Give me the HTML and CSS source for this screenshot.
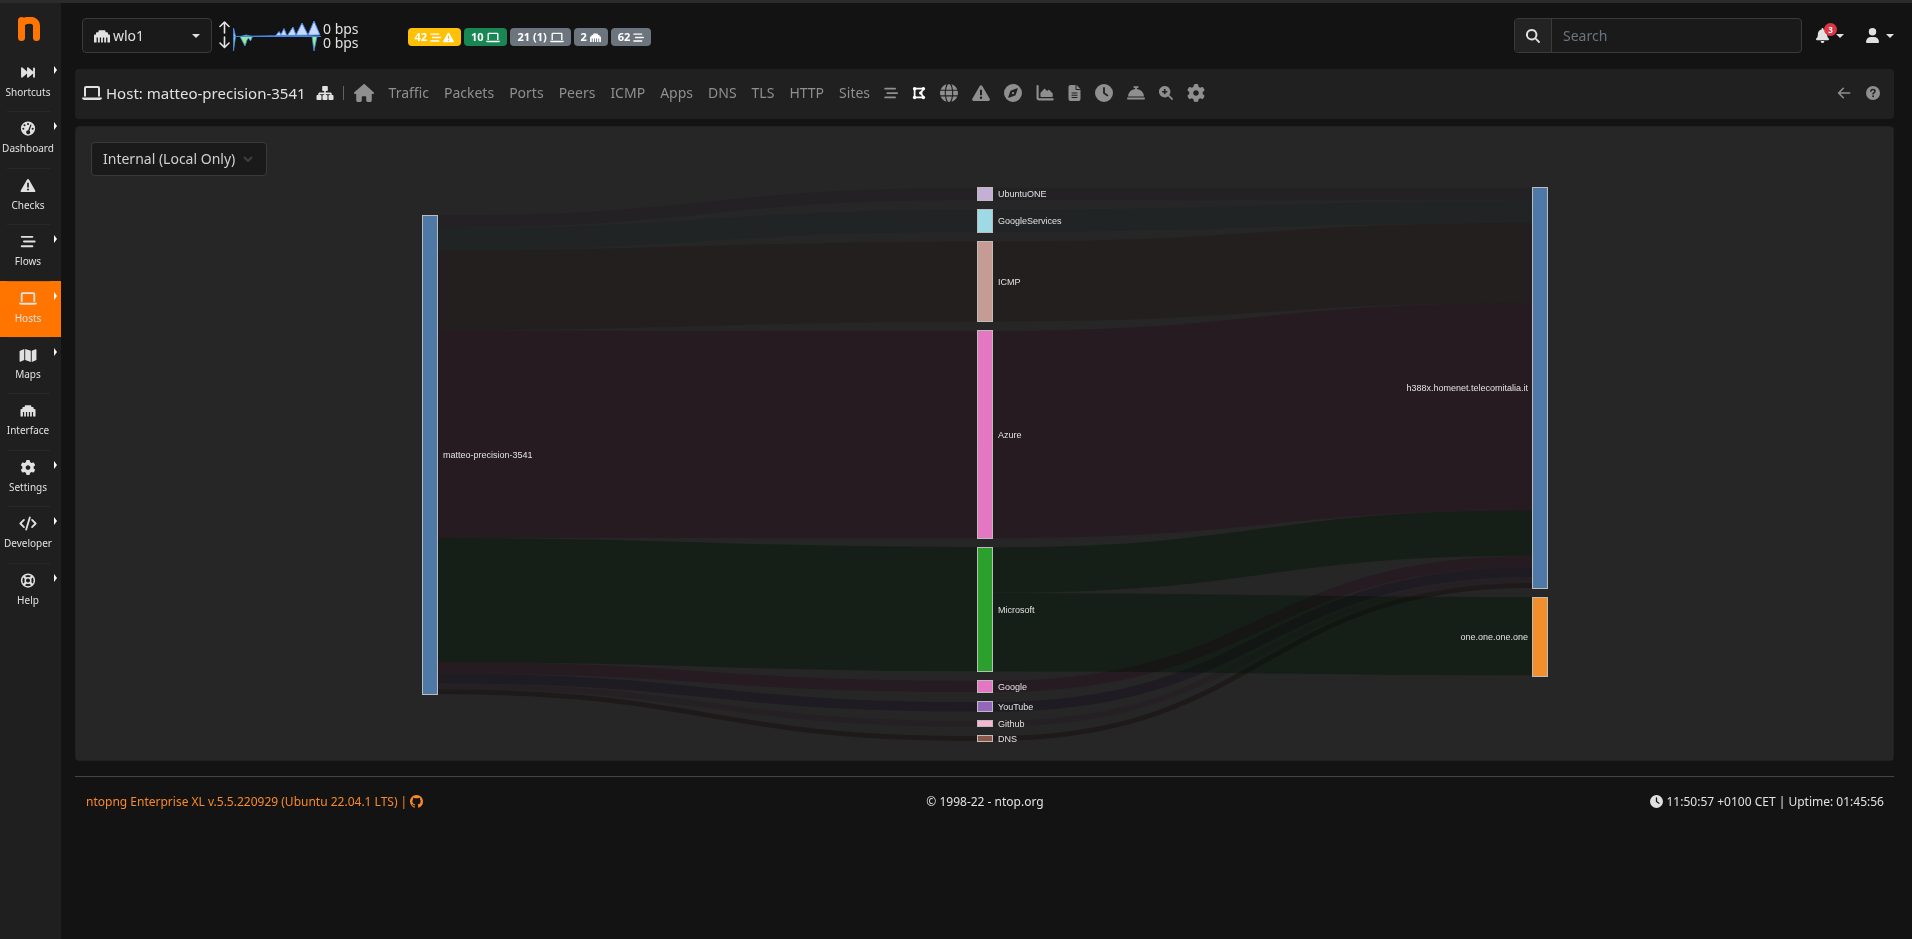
FILE: index.html
```html
<!DOCTYPE html>
<html lang="en">
<head>
<meta charset="utf-8">
<title>Host: matteo-precision-3541</title>
<link rel="stylesheet" href="styles.css">
</head>
<body>
<svg class="sprite" aria-hidden="true">
  <symbol id="i-forward" viewBox="0 0 16 16"><path d="M.6 3.2v9.6c0 .8.9 1.1 1.4.6L7 9v3.800c0 .8.900 1.100 1.400.6L13.400 9v4.200h2V2.800h-2V7L8.400 2.600C7.900 2.100 7 2.400 7 3.200V7L2 2.600C1.500 2.100.6 2.400.6 3.200z"/></symbol>
  <symbol id="i-gauge" viewBox="0 0 16 16"><path fill-rule="evenodd" d="M8 .4a7.600 7.600 0 1 0 0 15.200A7.600 7.600 0 0 0 8 .4zM8 2a1.100 1.100 0 1 1 0 2.200A1.100 1.100 0 0 1 8 2zM4.300 3.500a1.100 1.100 0 1 1 0 2.200 1.100 1.100 0 0 1 0-2.200zM3 7.200a1.100 1.100 0 1 1 0 2.200 1.100 1.100 0 0 1 0-2.200zm10 0a1.100 1.100 0 1 1 0 2.200 1.100 1.100 0 0 1 0-2.200zM10.600 3.600l1.200.5-2.200 6.200a2.200 2.200 0 1 1-1.400-.5z"/></symbol>
  <symbol id="i-warning" viewBox="0 0 16 16"><path fill-rule="evenodd" d="M8 1c.4 0 .8.2 1 .6l6.700 11.600c.5.800-.1 1.800-1 1.800H1.300c-.9 0-1.500-1-1-1.800L7 1.600c.2-.4.6-.6 1-.6zM7.100 5v5h1.800V5zM8 11.200a1.100 1.100 0 1 0 0 2.200 1.100 1.100 0 0 0 0-2.200z"/></symbol>
  <symbol id="i-stream" viewBox="0 0 16 16"><path d="M1.300 2h11.400a.8.8 0 0 1 0 2H1.300a.8.8 0 0 1 0-2zm2.400 5h11.400a.8.8 0 0 1 0 2H3.700a.8.8 0 0 1 0-2zm-2.400 5h11.400a.8.8 0 0 1 0 2H1.300a.8.8 0 0 1 0-2z"/></symbol>
  <symbol id="i-laptop" viewBox="0 0 20 16"><path fill-rule="evenodd" d="M4 1h12a2 2 0 0 1 2 2v8.500h-2V3H4v8.500H2V3a2 2 0 0 1 2-2zM.6 12.600h18.800c.3 0 .6.2.6.500 0 1-.9 1.900-2.400 1.900H2.400C.9 15 0 14.100 0 13.100c0-.3.3-.5.6-.500z"/></symbol>
  <symbol id="i-map" viewBox="0 0 18 16"><path d="M0 4.200 5 2.100v11.800l-4.200 1.700c-.4.2-.8-.1-.8-.500zM6 2.100l6 2v11.800l-6-2zm7 2 4.200-1.700c.4-.2.800.1.800.500v10.900l-5 2.100z"/></symbol>
  <symbol id="i-ethernet" viewBox="0 0 16 16"><path d="M0 14.500V7.500C0 6.900.4 6.500 1 6.500h1V5.200c0-.5.4-1 1-1h1.500V3.300c0-.500.4-1 1-1h5c.6 0 1 .5 1 1v.900H13c.6 0 1 .5 1 1v1.300h1c.6 0 1 .4 1 1v7H13.400V9.600h-1.300v4.900h-1.900V9.600H8.900v4.900H7.100V9.600H5.800v4.900H3.900V9.600H2.600v4.900z"/></symbol>
  <symbol id="i-gear" viewBox="0 0 512 512"><path fill-rule="evenodd" d="M495.900 166.600c3.200 8.700.5 18.400-6.400 24.600l-43.300 39.400c1.100 8.300 1.700 16.800 1.700 25.400s-.6 17.100-1.700 25.400l43.300 39.400c6.900 6.200 9.600 15.900 6.400 24.600c-4.400 11.900-9.700 23.300-15.800 34.300l-4.700 8.100c-6.600 11-14 21.400-22.100 31.200c-5.900 7.200-15.700 9.600-24.500 6.800l-55.700-17.700c-13.400 10.300-28.200 18.900-44 25.400l-12.500 57.100c-2 9.100-9 16.300-18.200 17.800c-13.800 2.300-28 3.500-42.500 3.500s-28.700-1.200-42.500-3.500c-9.200-1.500-16.200-8.700-18.200-17.800l-12.500-57.100c-15.800-6.500-30.600-15.100-44-25.400L83.100 425.900c-8.800 2.800-18.600.3-24.500-6.800c-8.100-9.800-15.500-20.200-22.100-31.200l-4.700-8.100c-6.100-11-11.400-22.400-15.800-34.300c-3.200-8.700-.5-18.400 6.400-24.600l43.300-39.400C64.600 273.100 64 264.600 64 256s.6-17.100 1.700-25.400L22.400 191.200c-6.900-6.200-9.600-15.900-6.400-24.600c4.400-11.900 9.700-23.300 15.800-34.300l4.700-8.100c6.600-11 14-21.400 22.100-31.200c5.900-7.200 15.700-9.600 24.500-6.800l55.700 17.700c13.400-10.300 28.200-18.900 44-25.400l12.500-57.100c2-9.100 9-16.300 18.200-17.800C227.300 1.200 241.500 0 256 0s28.700 1.200 42.500 3.500c9.200 1.500 16.200 8.700 18.200 17.800l12.500 57.100c15.800 6.500 30.600 15.100 44 25.400l55.700-17.700c8.800-2.800 18.600-.3 24.500 6.800c8.100 9.800 15.500 20.200 22.100 31.200l4.700 8.100c6.100 11 11.400 22.400 15.800 34.300zM256 336c44.200 0 80-35.800 80-80s-35.800-80-80-80s-80 35.800-80 80s35.800 80 80 80z"/></symbol>
  <symbol id="i-code" viewBox="0 0 20 16"><path fill="none" stroke="currentColor" stroke-width="2" stroke-linecap="round" stroke-linejoin="round" d="M5.500 4 1.500 8l4 4M14.500 4l4 4-4 4M12 1.200 8 14.800"/></symbol>
  <symbol id="i-ring" viewBox="0 0 16 16"><g fill="none" stroke="currentColor"><circle cx="8" cy="8" r="6.800" stroke-width="1.600"/><circle cx="8" cy="8" r="3" stroke-width="1.600"/><path stroke-width="2.600" d="m3.200 3.200 2.600 2.600m7-2.600-2.600 2.600m-7 7 2.600-2.600m7 2.600-2.600-2.600"/></g></symbol>
  <symbol id="i-sitemap" viewBox="0 0 18 16"><path d="M7 1h4c.5 0 .8.3.8.8v3.400c0 .5-.3.8-.8.8H9.800v1.600h4.400c1 0 1.600.7 1.600 1.600V10h.9c.500 0 .800.3.8.8v3.400c0 .5-.3.8-.8.800h-3.400c-.5 0-.8-.3-.8-.8v-3.400c0-.5.3-.8.8-.8h.9V9.200H9.800V10h.9c.5 0 .8.3.8.8v3.400c0 .5-.3.8-.8.8H7.300c-.5 0-.8-.3-.8-.8v-3.400c0-.5.3-.8.8-.8h.9v-.8H3.800v.8h.9c.5 0 .8.3.8.8v3.400c0 .5-.3.8-.8.8H1.300c-.5 0-.8-.3-.8-.8v-3.400c0-.5.3-.8.8-.8h.9v-.8c0-.9.600-1.600 1.600-1.600h4.400V6H7c-.5 0-.8-.3-.8-.800V1.800c0-.500.3-.8.8-.8z"/></symbol>
  <symbol id="i-home" viewBox="0 0 576 512"><path d="M575.800 255.500c0 18-15 32.100-32 32.100h-32l.7 160.200c0 2.700-.2 5.400-.5 8.100V472c0 22.100-17.900 40-40 40H392c-22.100 0-40-17.900-40-40V384c0-17.700-14.300-32-32-32H256c-17.700 0-32 14.300-32 32v88c0 22.100-17.900 40-40 40H104c-22.100 0-40-17.900-40-40V287.600H32c-18 0-32-14-32-32.100c0-9 3-17 10-24L266.400 8c7-7 15-8 22-8s15 2 21 7L564.800 231.500c8 7 12 15 11 24z"/></symbol>
  <symbol id="i-polygon" viewBox="0 0 16 16"><path fill="none" stroke="currentColor" stroke-width="2" d="M3 3h10M3 13h10M3 3v10M13 3.500 10 8l3 4.500"/><circle cx="3" cy="3" r="2"/><circle cx="13" cy="3" r="2"/><circle cx="3" cy="13" r="2"/><circle cx="13" cy="13" r="2"/><circle cx="10" cy="8" r="2"/></symbol>
  <symbol id="i-globe" viewBox="0 0 16 16"><path d="M5.500 5c.4-3 1.400-5 2.500-5s2.100 2 2.500 5zM10.700 6c.1 1.300.1 2.700 0 4H5.300a24 24 0 0 1 0-4zM5.500 11h5c-.4 3-1.400 5-2.500 5s-2.100-2-2.500-5zM10.200.3A8 8 0 0 1 15.400 5h-3.900C11.200 3 10.800 1.400 10.200.3zM15.700 6a8 8 0 0 1 0 4h-4c.1-1.300.1-2.700 0-4zM15.400 11a8 8 0 0 1-5.200 4.700c.6-1.100 1-2.700 1.300-4.700zM5.800.3C5.200 1.400 4.800 3 4.500 5H.6A8 8 0 0 1 5.800.3zM.3 6h4c-.1 1.300-.1 2.700 0 4h-4a8 8 0 0 1 0-4zM.6 11h3.900c.3 2 .7 3.600 1.300 4.700A8 8 0 0 1 .6 11z"/></symbol>
  <symbol id="i-compass" viewBox="0 0 16 16"><path fill-rule="evenodd" d="M8 0a8 8 0 1 0 0 16A8 8 0 0 0 8 0zm3.600 3.800c.4-.2.700.2.600.6L10.300 9.700c-.1.300-.3.500-.6.600l-5.300 1.900c-.4.100-.8-.2-.6-.6l1.900-5.300c.1-.3.3-.5.6-.6zM8 7a1 1 0 1 0 0 2 1 1 0 0 0 0-2z"/></symbol>
  <symbol id="i-chart" viewBox="0 0 17 16"><path fill="none" stroke="currentColor" stroke-width="2" stroke-linecap="round" d="M1.500 1.500v11c0 1 .5 1.500 1.500 1.500h12.800"/><path d="M4.500 7.600 7.400 4.400c.3-.4.800-.4 1.100-.1L10.500 6l1-.9c.3-.3.8-.3 1.100 0L15.400 8c.3.300.4.500.4.800V11c0 .5-.3.800-.8.800H5c-.5 0-.8-.3-.8-.8V8.300c0-.3.1-.5.3-.7z"/></symbol>
  <symbol id="i-file" viewBox="0 0 12 16"><path fill-rule="evenodd" d="M2 0h5v4c0 .6.4 1 1 1h4v9a2 2 0 0 1-2 2H2a2 2 0 0 1-2-2V2C0 .9.9 0 2 0zm6 0 4 4H8zM3.500 7.500h5a.5.5 0 0 1 0 1.100h-5a.5.5 0 0 1 0-1.100zm0 2.200h5a.5.5 0 0 1 0 1.100h-5a.5.5 0 0 1 0-1.100zm0 2.200h5a.5.5 0 0 1 0 1.100h-5a.5.5 0 0 1 0-1.100z"/></symbol>
  <symbol id="i-clock" viewBox="0 0 16 16"><path fill-rule="evenodd" d="M8 0a8 8 0 1 0 0 16A8 8 0 0 0 8 0zM7.200 3.500c0-1 1.600-1 1.600 0v4.200l2.700 1.800c.8.600 0 1.800-.9 1.300L7.600 8.700a.9.900 0 0 1-.4-.7z"/></symbol>
  <symbol id="i-concierge" viewBox="0 0 16 16"><path d="M6.300 2h3.400c.9 0 .9 1.500 0 1.500H8.800v.9A6.800 6.800 0 0 1 15 11H1a6.800 6.800 0 0 1 6.200-6.600v-.9h-.9c-.9 0-.9-1.500 0-1.500zM.8 12h14.400c1 0 1 1.800 0 1.800H.8c-1 0-1-1.800 0-1.800z"/></symbol>
  <symbol id="i-zoom" viewBox="0 0 16 16"><path fill-rule="evenodd" d="M6.500 0a6.500 6.500 0 0 1 5.200 10.400l4 3.900c.8.900-.5 2.300-1.400 1.400l-3.900-4A6.500 6.500 0 1 1 6.500 0zM5.600 3.500v2.100H3.500v1.800h2.100v2.100h1.800V7.400h2.100V5.600H7.400V3.500z"/></symbol>
  <symbol id="i-search" viewBox="0 0 16 16"><path fill-rule="evenodd" d="M6.500 0a6.500 6.500 0 0 1 5.200 10.400l3.900 3.700c.9.900-.6 2.500-1.500 1.600l-3.700-4A6.500 6.500 0 1 1 6.500 0zm0 2.200a4.300 4.300 0 1 0 0 8.600 4.300 4.300 0 0 0 0-8.600z"/></symbol>
  <symbol id="i-back" viewBox="0 0 16 16"><path fill="none" stroke="currentColor" stroke-width="1.800" stroke-linecap="round" stroke-linejoin="round" d="M14.500 8H2M7.200 2.600 1.800 8l5.400 5.400"/></symbol>
  <symbol id="i-help" viewBox="0 0 16 16"><circle cx="8" cy="8" r="8"/><path fill="none" stroke="#202020" stroke-width="1.700" stroke-linecap="round" d="M5.600 6c.1-1.200.9-1.900 2.100-1.900 1.500 0 2.600.6 2.600 1.900 0 1.400-1.400 1.700-2.200 2.600V9"/><circle cx="8.100" cy="11.700" r="1.100" fill="#202020"/></symbol>
  <symbol id="i-bell" viewBox="0 0 448 512"><path d="M224 0c-17.700 0-32 14.300-32 32V51.200C119 66 64 130.600 64 208v18.800c0 47-17.300 92.400-48.500 127.600l-7.400 8.300c-8.400 9.400-10.400 22.900-5.300 34.400S19.400 416 32 416H416c12.600 0 24-7.400 29.200-18.900s3.100-25-5.300-34.400l-7.400-8.300C401.300 319.200 384 273.900 384 226.800V208c0-77.400-55-142-128-156.800V32c0-17.700-14.300-32-32-32zm45.300 493.300c12-12 18.700-28.300 18.700-45.300H160c0 17 6.700 33.300 18.700 45.300s28.300 18.700 45.300 18.700s33.300-6.700 45.300-18.700z"/></symbol>
  <symbol id="i-user" viewBox="0 0 14 16"><circle cx="7" cy="4" r="4"/><path d="M5.600 9.500h2.800A5.500 5.500 0 0 1 14 15c0 .6-.4 1-1 1H1c-.6 0-1-.4-1-1a5.500 5.500 0 0 1 5.600-5.500z"/></symbol>
  <symbol id="i-github" viewBox="0 0 16 16"><path d="M8 0C3.580 0 0 3.580 0 8c0 3.540 2.290 6.530 5.470 7.590.4.070.55-.17.55-.38 0-.19-.01-.82-.01-1.490-2.010.37-2.530-.49-2.690-.94-.09-.23-.48-.94-.82-1.130-.28-.15-.68-.52-.01-.53.63-.01 1.080.58 1.230.82.72 1.210 1.870.87 2.330.66.07-.52.28-.87.51-1.070-1.780-.2-3.640-.89-3.640-3.950 0-.87.31-1.590.82-2.150-.08-.2-.36-1.020.08-2.120 0 0 .67-.21 2.200.82.64-.18 1.320-.27 2-.27s1.360.09 2 .27c1.530-1.040 2.200-.82 2.200-.82.44 1.100.16 1.920.08 2.120.51.56.82 1.270.82 2.150 0 3.070-1.870 3.750-3.650 3.950.29.25.54.73.54 1.480 0 1.070-.01 1.930-.01 2.200 0 .21.15.46.55.38A8 8 0 0 0 16 8c0-4.420-3.580-8-8-8z"/></symbol>
</svg>

<div class="app">
  <aside class="sidebar">
    <a class="logo" href="#" aria-label="ntopng"><svg viewBox="0 0 22 24"><path fill="none" stroke="#ff7500" stroke-width="7" stroke-linecap="round" stroke-linejoin="round" d="M3.500 20.500v-17M3.800 6C7 2.600 18.500 1 18.500 9v11.500"/></svg></a>
    <nav class="menu">
      <a class="item more" href="#"><svg class="ic"><use href="#i-forward"/></svg><span>Shortcuts</span></a>
      <a class="item more" href="#"><svg class="ic"><use href="#i-gauge"/></svg><span>Dashboard</span></a>
      <a class="item" href="#"><svg class="ic"><use href="#i-warning"/></svg><span>Checks</span></a>
      <a class="item more" href="#"><svg class="ic"><use href="#i-stream"/></svg><span>Flows</span></a>
      <a class="item more active" href="#"><svg class="ic wide"><use href="#i-laptop"/></svg><span>Hosts</span></a>
      <a class="item more" href="#"><svg class="ic wide"><use href="#i-map"/></svg><span>Maps</span></a>
      <a class="item" href="#"><svg class="ic"><use href="#i-ethernet"/></svg><span>Interface</span></a>
      <a class="item more" href="#"><svg class="ic"><use href="#i-gear"/></svg><span>Settings</span></a>
      <a class="item more" href="#"><svg class="ic wide"><use href="#i-code"/></svg><span>Developer</span></a>
      <a class="item more" href="#"><svg class="ic"><use href="#i-ring"/></svg><span>Help</span></a>
    </nav>
  </aside>

  <div class="main">
    <header class="topbar">
      <button class="iface" type="button"><svg class="ic"><use href="#i-ethernet"/></svg><span>wlo1</span><i class="caret"></i></button>
      <div class="rates">
        <svg class="spark" viewBox="0 0 102 32" aria-hidden="true">
          <path fill="none" stroke="#e4e4e4" stroke-width="1.600" stroke-linecap="round" stroke-linejoin="round" d="M5.500 13V2.500M1 6.500l4.500-4.500L10 6.500M5.500 17v10M1 23l4.500 4.500L10 23"/>
          <path fill="#c6dafd" stroke="#4a86e8" d="M14.500 16.500V8l2 8.500H22l5-1.500 6 1.500h16l2-.5 2 .5h3l4-5 2 3 3-6 3 7.500 6-9 3 8 6-12 6 12 6-14 6 14z"/>
          <path fill="#90f08c" stroke="#4a86e8" stroke-width=".8" d="M14.500 16.500V31l2-14.500H21l5 9.500 2-6 1.500-2 2 3 2-4.500h59.500l2 14.500 3-14.500z"/>
          <path stroke="#4a86e8" d="M14 16.500h88"/>
        </svg>
        <div class="bps">0 bps<br>0 bps</div>
      </div>
      <div class="badges">
        <a class="badge warn" href="#">42 <svg class="ic"><use href="#i-stream"/></svg><svg class="ic"><use href="#i-warning"/></svg></a>
        <a class="badge ok" href="#">10 <svg class="ic lap"><use href="#i-laptop"/></svg></a>
        <a class="badge" href="#">21 (1) <svg class="ic lap"><use href="#i-laptop"/></svg></a>
        <a class="badge" href="#">2 <svg class="ic"><use href="#i-ethernet"/></svg></a>
        <a class="badge" href="#">62 <svg class="ic"><use href="#i-stream"/></svg></a>
      </div>
      <form class="search">
        <label for="q" aria-label="Search"><svg class="ic"><use href="#i-search"/></svg></label>
        <input id="q" type="text" placeholder="Search">
      </form>
      <button class="drop bell" type="button" aria-label="Notifications"><svg class="ic"><use href="#i-bell"/></svg><b class="count">3</b><i class="caret"></i></button>
      <button class="drop user" type="button" aria-label="User"><svg class="ic"><use href="#i-user"/></svg><i class="caret"></i></button>
    </header>

    <nav class="hostbar">
      <h1><svg class="ic lap"><use href="#i-laptop"/></svg>Host: matteo-precision-3541<svg class="ic site"><use href="#i-sitemap"/></svg></h1>
      <i class="divider"></i>
      <div class="tabs">
        <a href="#" aria-label="Home"><svg class="ic home"><use href="#i-home"/></svg></a>
        <a href="#">Traffic</a><a href="#">Packets</a><a href="#">Ports</a><a href="#">Peers</a><a href="#">ICMP</a><a href="#">Apps</a><a href="#">DNS</a><a href="#">TLS</a><a href="#">HTTP</a><a href="#">Sites</a>
      </div>
      <div class="tabs icons">
        <a href="#" aria-label="Flows"><svg class="ic small"><use href="#i-stream"/></svg></a>
        <a class="on" href="#" aria-label="Service map"><svg class="ic small"><use href="#i-polygon"/></svg></a>
        <a href="#" aria-label="Geomap"><svg class="ic"><use href="#i-globe"/></svg></a>
        <a href="#" aria-label="Alerts"><svg class="ic"><use href="#i-warning"/></svg></a>
        <a href="#" aria-label="Explorer"><svg class="ic"><use href="#i-compass"/></svg></a>
        <a href="#" aria-label="Charts"><svg class="ic"><use href="#i-chart"/></svg></a>
        <a href="#" aria-label="Report"><svg class="ic file"><use href="#i-file"/></svg></a>
        <a href="#" aria-label="History"><svg class="ic"><use href="#i-clock"/></svg></a>
        <a href="#" aria-label="Services"><svg class="ic"><use href="#i-concierge"/></svg></a>
        <a href="#" aria-label="Zoom in"><svg class="ic small"><use href="#i-zoom"/></svg></a>
        <a href="#" aria-label="Settings"><svg class="ic"><use href="#i-gear"/></svg></a>
      </div>
      <div class="tabs end">
        <a href="#" aria-label="Back"><svg class="ic small"><use href="#i-back"/></svg></a>
        <a href="#" aria-label="Help"><svg class="ic small"><use href="#i-help"/></svg></a>
      </div>
    </nav>

    <main class="panel">
      <div class="filter">
        <select aria-label="Traffic direction"><option>Internal (Local Only)</option></select>
        <svg class="chev" viewBox="0 0 10 6" aria-hidden="true"><path d="M1 1l4 4 4-4"/></svg>
      </div>
      <svg class="sankey" viewBox="76 176 1817 584" role="img" aria-label="Traffic flows by application">
        <g class="links">
          <g stroke="#ebddf2"><path stroke-width="12.500" d="M438 221.500C707.500 221.500 707.500 194 977 194"/><path stroke-width="12.500" d="M993 194H1532"/></g>
          <g stroke="#d7f2f8"><path stroke-width="22.500" d="M438 239C707.500 239 707.500 221 977 221M993 221C1262.500 221 1262.500 211.700 1532 211.700"/></g>
          <g stroke="#ebd0c9"><path stroke-width="80.300" d="M438 290.400C707.500 290.400 707.500 281.500 977 281.500M993 281.500C1262.500 281.500 1262.500 263 1532 263"/></g>
          <g stroke="#ffb5dd"><path stroke-width="207.500" d="M438 434.200C707.500 434.200 707.500 434.500 977 434.500M993 434.500C1262.500 434.500 1262.500 406.800 1532 406.800"/></g>
          <g stroke="#94d09a"><path stroke-width="124.300" d="M438 600C707.500 600 707.500 609.200 977 609.200"/><path stroke-width="45.700" d="M993 570C1262.500 570 1262.500 533 1532 533"/><path stroke-width="78.500" d="M993 632.200C1262.500 632.200 1262.500 636.300 1532 636.300"/></g>
          <g stroke="#ffb5dd"><path stroke-width="11.500" d="M438 667.800C707.500 667.800 707.500 686.500 977 686.500M993 686.500C1262.500 686.500 1262.500 561.500 1532 561.500"/></g>
          <g stroke="#c9bce4"><path stroke-width="10" d="M438 678.500C707.500 678.500 707.500 706.800 977 706.800M993 706.800C1262.500 706.800 1262.500 572.300 1532 572.300"/></g>
          <g stroke="#f2d7eb"><path stroke-width="6" d="M438 686.500C707.500 686.500 707.500 723.800 977 723.800M993 723.800C1262.500 723.800 1262.500 580.200 1532 580.200"/></g>
          <g stroke="#c9aea8"><path stroke-width="5" d="M438 691.800C707.500 691.800 707.500 738.500 977 738.500M993 738.500C1262.500 738.500 1262.500 585.500 1532 585.500"/></g>
        </g>
        <g class="nodes">
          <rect x="422.500" y="215.500" width="15" height="479" fill="#4e79a7"/>
          <rect x="977.500" y="187.500" width="15" height="13" fill="#c5b0d5"/>
          <rect x="977.500" y="209.500" width="15" height="23" fill="#9edae5"/>
          <rect x="977.500" y="241.500" width="15" height="80" fill="#c49c94"/>
          <rect x="977.500" y="330.500" width="15" height="208" fill="#e377c2"/>
          <rect x="977.500" y="547.500" width="15" height="124" fill="#2ca02c"/>
          <rect x="977.500" y="680.500" width="15" height="12" fill="#e377c2"/>
          <rect x="977.500" y="701.500" width="15" height="10" fill="#9467bd"/>
          <rect x="977.500" y="720.500" width="15" height="6" fill="#f7b6d2"/>
          <rect x="977.500" y="735.500" width="15" height="6" fill="#8c564b"/>
          <rect x="1532.500" y="187.500" width="15" height="401" fill="#4e79a7"/>
          <rect x="1532.500" y="597.500" width="15" height="79" fill="#f28e2b"/>
        </g>
        <g class="names">
          <text x="443" y="458">matteo-precision-3541</text>
          <text x="998" y="197">UbuntuONE</text>
          <text x="998" y="224">GoogleServices</text>
          <text x="998" y="285">ICMP</text>
          <text x="998" y="438">Azure</text>
          <text x="998" y="613">Microsoft</text>
          <text x="998" y="690">Google</text>
          <text x="998" y="710">YouTube</text>
          <text x="998" y="727">Github</text>
          <text x="998" y="742">DNS</text>
          <text class="end" x="1528" y="391">h388x.homenet.telecomitalia.it</text>
          <text class="end" x="1528" y="640">one.one.one.one</text>
        </g>
      </svg>
    </main>

    <footer class="footer">
      <a href="#">ntopng Enterprise XL v.5.5.220929 (Ubuntu 22.04.1 LTS) | <svg class="ic"><use href="#i-github"/></svg></a>
      <span>© 1998-22 - ntop.org</span>
      <span class="time"><svg class="ic"><use href="#i-clock"/></svg> 11:50:57 +0100 CET | Uptime: 01:45:56</span>
    </footer>
  </div>
</div>
</body>
</html>
```

FILE: styles.css
```css
* { box-sizing: border-box; }
body {
  margin: 0;
  background: #131313;
  border-top: 3px solid #2b2b2b;
  color: #e1e1e1;
  font: 14px/20px "Noto Sans", "Open Sans", sans-serif;
}
a { color: inherit; text-decoration: none; }
button, input, select { font: inherit; color: inherit; }
.sprite { display: none; }
.ic { width: 16px; height: 16px; fill: currentColor; flex: none; }
.caret {
  border: 4px solid transparent;
  border-top-color: currentColor;
  border-bottom: 0;
}
.app { display: flex; min-height: calc(100vh - 3px); }

.sidebar { width: 61px; flex: none; background: #1f1f1f; }
.logo { display: flex; justify-content: center; padding: 14px 3px 14px 0; }
.logo svg { width: 22px; height: 24px; }
.menu { display: grid; grid-auto-rows: 1fr; min-height: 564px; }
.item {
  position: relative;
  display: flex;
  flex-direction: column;
  align-items: center;
  gap: 3px;
  padding: 10px 5px 0 0;
  font-size: 10px;
  line-height: 18px;
}
.item::before {
  content: "";
  position: absolute;
  top: 0;
  left: 7px;
  width: 43px;
  border-top: 1px solid #282828;
}
.item:first-child::before { display: none; }
.item .ic { height: 15px; }
.item .wide { width: 18px; }
.item.more::after {
  content: "";
  position: absolute;
  top: 11px;
  right: 4px;
  border: 4px solid transparent;
  border-left: 3px solid #fff;
  border-right: 0;
}
.item.active { background: #ff7500; }
.item.active::before { border-color: #d96808; }

.main { flex: 1; min-width: 0; padding: 0 18px 0 14px; }
.topbar { display: flex; align-items: center; padding: 15px 0 16px 7px; }
.iface {
  display: flex;
  align-items: center;
  gap: 3px;
  width: 130px;
  height: 35px;
  padding: 0 11px;
  background: #1a1a1a;
  border: 1px solid #3a3a3a;
  border-radius: 4px;
}
.iface .caret { margin-left: auto; }
.rates { display: flex; align-items: center; gap: 2px; margin-left: 7px; }
.spark { width: 102px; height: 32px; }
.bps { line-height: 14px; }
.badges { display: flex; gap: 3px; margin: 3px 0 0 49px; }
.badge {
  display: flex;
  align-items: center;
  height: 18px;
  padding: 0 7px;
  border-radius: 4px;
  background: #6c757d;
  color: #fff;
  font-size: 11px;
  font-weight: 700;
  white-space: pre;
}
.badge .ic { width: 11px; height: 11px; }
.badge .lap { width: 14px; }
.badge .ic + .ic { margin-left: 2px; }
.badge.warn { background: #ffc107; }
.badge.ok { background: #198754; }
.search {
  display: flex;
  width: 288px;
  height: 35px;
  margin-left: auto;
  border: 1px solid #3a3a3a;
  border-radius: 4px;
  overflow: hidden;
  background: #1a1a1a;
}
.search label {
  display: grid;
  place-items: center;
  width: 37px;
  background: #232323;
  border-right: 1px solid #3a3a3a;
}
.search .ic { width: 14px; height: 14px; }
.search input { flex: 1; min-width: 0; padding: 0 11px; background: none; border: 0; }
.search input::placeholder { color: #6c757d; opacity: 1; }
.drop {
  position: relative;
  display: flex;
  align-items: center;
  gap: 7px;
  padding: 0;
  border: 0;
  background: none;
}
.bell { margin-left: 14px; }
.user { margin-left: 22px; }
.drop .ic { width: 13px; height: 15px; }
.count {
  position: absolute;
  left: 8px;
  top: -5px;
  width: 13px;
  height: 13px;
  border-radius: 50%;
  background: #dc3545;
  color: #fff;
  font-size: 8px;
  line-height: 13px;
}

.hostbar {
  display: flex;
  align-items: center;
  height: 50px;
  padding: 0 14px 2px 7px;
  border-radius: 4px;
  background: #202020;
}
.hostbar h1 { display: flex; align-items: center; gap: 4px; margin: 0; font-size: 15px; font-weight: 400; }
.hostbar .lap { width: 20px; }
.hostbar .site { width: 18px; margin-left: 6px; }
.divider { height: 14px; margin: 0 10px 0 9px; border-left: 1px solid #5c636a; }
.tabs { display: flex; align-items: center; gap: 15px; color: #8f8f8f; }
.tabs a { display: flex; }
.tabs .ic { width: 18px; height: 18px; }
.tabs .home { width: 20px; height: 18px; }
.tabs .small { width: 14px; height: 14px; }
.tabs .file { width: 13px; height: 16px; }
.tabs .on { color: #fff; }
.icons { gap: 14px; margin-left: 14px; }
.end { margin-left: auto; }

.panel {
  margin-top: 7px;
  padding: 15px 0 0;
  border: 1px solid #212121;
  border-radius: 4px;
  background: #262626;
}
.filter { position: relative; display: flex; width: 176px; margin-left: 15px; }
.filter select {
  appearance: none;
  width: 100%;
  height: 34px;
  padding: 0 11px;
  border: 1px solid #3a3a3a;
  border-radius: 4px;
  background: #1a1a1a;
  color: #d0d0d0;
}
.chev { position: absolute; right: 14px; top: 14px; width: 10px; height: 6px; fill: none; stroke: #3c4043; stroke-width: 2; }
.sankey { display: block; width: 100%; height: auto; background: #262626; }
.links { fill: none; }
.links path { mix-blend-mode: multiply; }
.nodes rect { stroke: #bcbcbc; shape-rendering: crispEdges; }
.names { fill: #e1e1e1; font: 9px "Liberation Sans", Arial, sans-serif; }
.names .end { text-anchor: end; }

.footer {
  display: grid;
  grid-template-columns: 1fr auto 1fr;
  margin-top: 15px;
  padding: 15px 10px 15px 11px;
  border-top: 1px solid #444;
  font-size: 12px;
}
.footer a { color: #f98a26; }
.footer .ic { width: 13px; height: 13px; vertical-align: -2px; }
.time { text-align: right; }
```
